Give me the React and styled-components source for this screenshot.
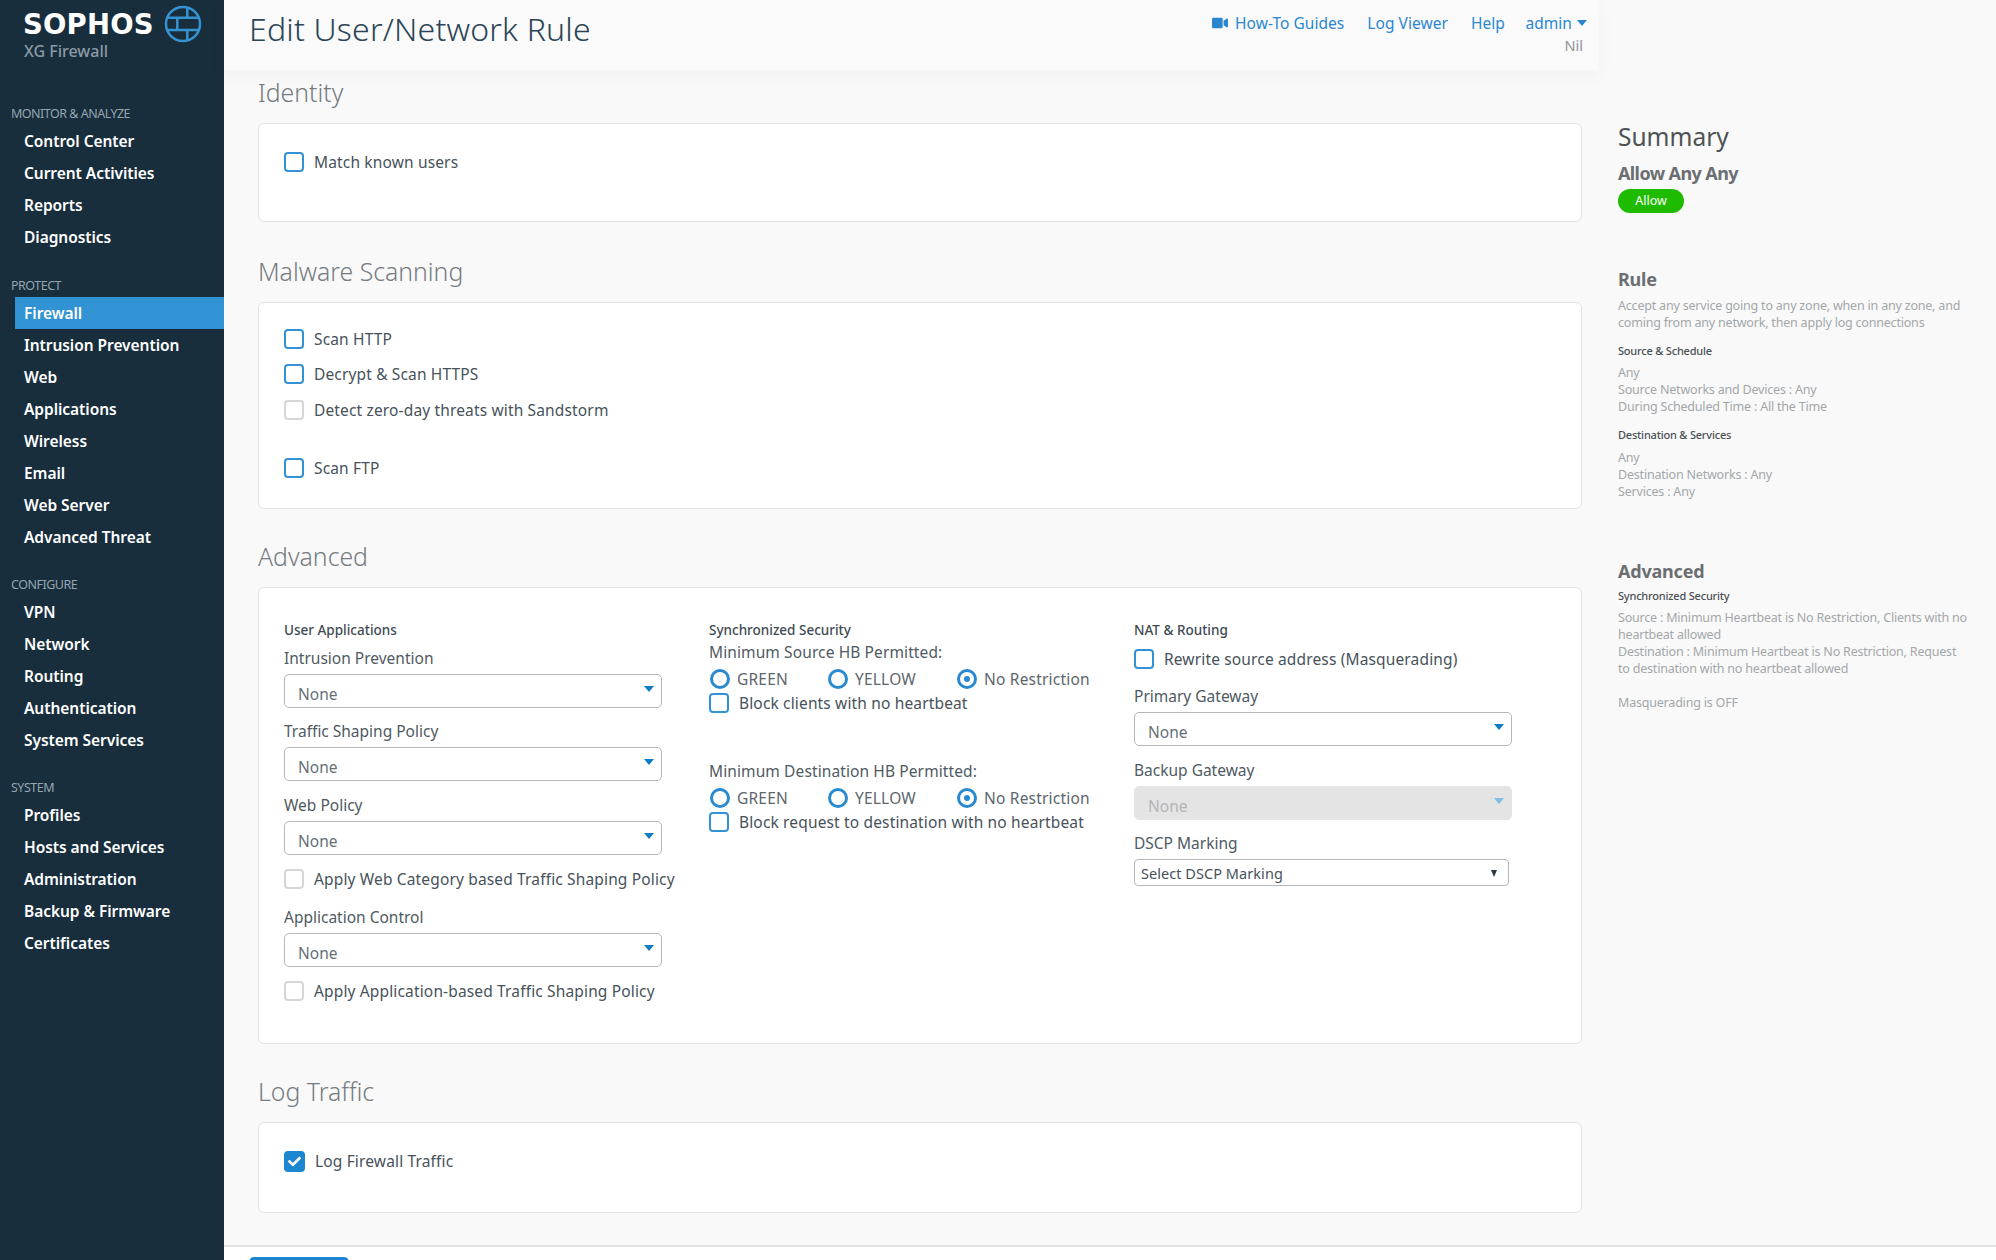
import React from "react";
import styled, { createGlobalStyle } from "styled-components";
import { FaVideo, FaCheck } from "react-icons/fa";

const Global = createGlobalStyle`
  html, body { margin: 0; padding: 0; height: 100%; overflow: hidden; background: #f9f9f9; }
  * { box-sizing: border-box; }
  body { font-family: "Noto Sans", "Liberation Sans", sans-serif; }
`;

const Page = styled.div`
  display: flex;
  width: 1996px;
  height: 1260px;
  overflow: hidden;
`;

const Sidebar = styled.nav`
  width: 224px;
  flex: none;
  background: #182e3d;
  padding-top: 14px;
`;

const Brand = styled.div`
  position: relative;
  height: 87px;
  padding-left: 23px;
`;

const BrandName = styled.div`
  font-family: "DejaVu Sans", sans-serif;
  font-weight: 700;
  font-size: 27.5px;
  line-height: 21px;
  letter-spacing: 0.2px;
  color: #fff;
`;

const BrandSub = styled.div`
  margin-top: 6px;
  margin-left: 1px;
  font-size: 16px;
  line-height: 20px;
  font-weight: 500;
  color: #8b9aa3;
`;

const Globe = styled.svg`
  position: absolute;
  left: 164px;
  top: -9px;
`;

const NavGroup = styled.div`
  margin-bottom: ${(p) => p.$gap || 19}px;
`;

const NavLabel = styled.div`
  height: 24px;
  line-height: 25px;
  padding-left: 11px;
  font-size: 12.5px;
  letter-spacing: -0.5px;
  color: #94a5b0;
`;

const NavItem = styled.div`
  height: 32px;
  line-height: 32px;
  margin-left: 15px;
  padding-left: 9px;
  font-size: 15.5px;
  font-weight: 600;
  letter-spacing: -0.05px;
  color: #fff;
  background: ${(p) => (p.$active ? "#3193d3" : "transparent")};
`;

const Body = styled.div`
  flex: 1;
  display: flex;
  flex-direction: column;
  min-width: 0;
`;

const Top = styled.div`
  flex: 1;
  display: flex;
  min-height: 0;
`;

const Main = styled.div`
  width: 1375px;
  flex: none;
`;

const Header = styled.header`
  position: relative;
  height: 70px;
  padding: 8px 12px 0 25px;
  display: flex;
  justify-content: space-between;
  background: #fafafa;
  box-shadow: 0 6px 20px rgba(0, 0, 0, 0.03);
`;

const Title = styled.h1`
  margin: 0;
  font-size: 32px;
  line-height: 42px;
  font-weight: 300;
  letter-spacing: 0.2px;
  color: #2b4556;
`;

const HeaderRight = styled.div`
  text-align: right;
  padding-top: 1px;
`;

const Links = styled.div`
  display: flex;
  align-items: center;
  gap: 23px;
  height: 28px;
`;

const Link = styled.a`
  display: flex;
  align-items: center;
  gap: 7px;
  font-size: 15.5px;
  letter-spacing: 0.05px;
  color: #2a87cf;
`;

const UserLink = styled(Link)`
  margin-left: -2.5px;
`;

const Caret = styled.span`
  width: 0;
  height: 0;
  margin-left: -2px;
  border-left: 5px solid transparent;
  border-right: 5px solid transparent;
  border-top: 6px solid #2a87cf;
`;

const Nil = styled.div`
  font-size: 14.5px;
  line-height: 16px;
  padding-right: 4px;
  color: #8d9499;
`;

const Content = styled.div`
  padding: 4px 17px 0 34px;
`;

const SectionTitle = styled.h2`
  margin: 0 0 13px;
  font-size: 24.8px;
  line-height: 36px;
  font-weight: 300;
  color: #767c81;
`;

const Card = styled.section`
  height: ${(p) => p.$h}px;
  margin-bottom: ${(p) => p.$gap || 29}px;
  padding: ${(p) => p.$pad || 0}px 0 0 25px;
  background: #fff;
  border: 1.5px solid #e2e2e2;
  border-radius: 6px;
`;

const Check = styled.span`
  flex: none;
  width: ${(p) => (p.$on ? 21 : 20)}px;
  height: ${(p) => (p.$on ? 21 : 20)}px;
  display: inline-flex;
  align-items: center;
  justify-content: center;
  border-radius: 4px;
  border: 2px solid ${(p) => (p.$muted ? "#d4d6d8" : p.$on ? "#1b87d0" : "#3391d6")};
  background: ${(p) => (p.$on ? "#1b87d0" : "#fff")};
  color: #fff;
  font-size: 13px;
`;

const CheckRow = styled.label`
  display: flex;
  align-items: center;
  gap: ${(p) => p.$gap || 10}px;
  height: 24px;
  margin-top: ${(p) => p.$mt || 0}px;
  font-size: 15.5px;
  letter-spacing: 0.15px;
  color: #47525a;
  white-space: nowrap;
`;

const Columns = styled.div`
  display: flex;
`;

const Column = styled.div`
  width: 425px;
  flex: none;
`;

const ColHead = styled.div`
  height: 20px;
  line-height: 20px;
  font-size: 13.5px;
  font-weight: 500;
  color: #3e4a52;
`;

const FieldLabel = styled.div`
  height: 24px;
  line-height: 24px;
  margin-top: ${(p) => p.$mt ?? 12}px;
  font-size: 15.5px;
  color: #4f5a62;
`;

const Select = styled.div`
  position: relative;
  width: 378px;
  height: 34px;
  margin-top: 4px;
  padding: 7px 0 0 13px;
  font-size: 15.5px;
  line-height: 24px;
  border-radius: 5px;
  border: 1px solid ${(p) => (p.$off ? "#e4e4e4" : "#b3b8bc")};
  background: ${(p) => (p.$off ? "#e4e4e4" : "#fff")};
  color: ${(p) => (p.$off ? "#b3b5b7" : "#666f76")};
  &::after {
    content: "";
    position: absolute;
    right: 7px;
    top: 11px;
    border-left: 5px solid transparent;
    border-right: 5px solid transparent;
    border-top: 6px solid ${(p) => (p.$off ? "#7fbce6" : "#0f7cc6")};
  }
`;

const NativeSelect = styled.div`
  position: relative;
  width: 375px;
  height: 27px;
  margin-top: 4px;
  padding-left: 6px;
  font-size: 14.5px;
  letter-spacing: 0.05px;
  line-height: 26px;
  border-radius: 4px;
  border: 1px solid #b3b8bc;
  background: #fff;
  color: #47525a;
  &::after {
    content: "";
    position: absolute;
    right: 11px;
    top: 10px;
    border-left: 3.5px solid transparent;
    border-right: 3.5px solid transparent;
    border-top: 7px solid #2b3a44;
  }
`;

const HbLabel = styled.div`
  height: 22px;
  line-height: 22px;
  margin-top: ${(p) => p.$mt || 0}px;
  font-size: 15.5px;
  letter-spacing: 0.11px;
  color: #4f5a62;
`;

const RadioRow = styled.div`
  display: grid;
  grid-template-columns: 118px 129px auto;
  height: 24px;
  margin-top: 4px;
  margin-left: 1px;
`;

const RadioItem = styled.label`
  display: flex;
  align-items: center;
  gap: 7px;
  font-size: 15.5px;
  letter-spacing: 0.2px;
  color: #5c666d;
  white-space: nowrap;
`;

const Radio = styled.span`
  width: 20px;
  height: 20px;
  flex: none;
  display: inline-flex;
  align-items: center;
  justify-content: center;
  border-radius: 50%;
  border: 3px solid #2a8ad0;
  background: #fff;
  &::after {
    content: "";
    width: 6px;
    height: 6px;
    border-radius: 50%;
    background: ${(p) => (p.$on ? "#2a8ad0" : "transparent")};
  }
`;

const Summary = styled.aside`
  flex: 1;
  padding: 119px 28px 0 19px;
`;

const SumTitle = styled.div`
  font-size: 24.5px;
  line-height: 36px;
  color: #4d5255;
`;

const SumName = styled.div`
  margin-top: 4px;
  font-size: 18px;
  line-height: 28px;
  font-weight: 700;
  letter-spacing: -0.6px;
  color: #6c6f71;
`;

const Pill = styled.div`
  width: 66px;
  height: 24px;
  margin-top: 2px;
  border-radius: 12px;
  background: #1fbb00;
  color: #fff;
  font-size: 12.5px;
  line-height: 24px;
  text-align: center;
`;

const SumHead = styled.div`
  margin-top: ${(p) => p.$mt}px;
  font-size: 18px;
  line-height: 28px;
  font-weight: 700;
  letter-spacing: -0.2px;
  color: #6c6f71;
`;

const SumSub = styled.div`
  margin-top: ${(p) => p.$mt}px;
  font-size: 11px;
  line-height: 17px;
  font-weight: 500;
  letter-spacing: -0.2px;
  color: #4b5054;
`;

const SumText = styled.div`
  margin-top: ${(p) => p.$mt || 0}px;
  font-size: 12.5px;
  line-height: 17px;
  letter-spacing: -0.2px;
  color: #a3a7aa;
`;

const Footer = styled.footer`
  height: 15px;
  flex: none;
  padding: 10px 0 0 25px;
  background: #fff;
  border-top: 2px solid #e2e2e2;
  overflow: hidden;
`;

const SaveButton = styled.div`
  width: 100px;
  height: 30px;
  border-radius: 5px 5px 0 0;
  background: #1b87d0;
`;

function SidebarGroup({ label, items, active, gap }) {
  return (
    <NavGroup $gap={gap}>
      <NavLabel>{label}</NavLabel>
      {items.map((item) => (
        <NavItem key={item} $active={item === active}>{item}</NavItem>
      ))}
    </NavGroup>
  );
}

function Section({ title, h, pad, gap, children }) {
  return (
    <>
      <SectionTitle>{title}</SectionTitle>
      <Card $h={h} $pad={pad} $gap={gap}>{children}</Card>
    </>
  );
}

function Option({ label, muted, on, mt }) {
  return (
    <CheckRow $mt={mt}>
      <Check $muted={muted} $on={on}>{on ? <FaCheck /> : null}</Check>
      {label}
    </CheckRow>
  );
}

function SelectField({ label, mt, off }) {
  return (
    <>
      <FieldLabel $mt={mt}>{label}</FieldLabel>
      <Select $off={off}>None</Select>
    </>
  );
}

function Heartbeat({ label, mt, block }) {
  return (
    <>
      <HbLabel $mt={mt}>{label}</HbLabel>
      <RadioRow>
        <RadioItem><Radio />GREEN</RadioItem>
        <RadioItem><Radio />YELLOW</RadioItem>
        <RadioItem><Radio $on />No Restriction</RadioItem>
      </RadioRow>
      <CheckRow>
        <Check />
        {block}
      </CheckRow>
    </>
  );
}

export default function App() {
  return (
    <Page>
      <Global />
      <Sidebar>
        <Brand>
          <BrandName>SOPHOS</BrandName>
          <BrandSub>XG Firewall</BrandSub>
          <Globe width="38" height="38" viewBox="0 0 38 38" fill="none" stroke="#3593d2" strokeWidth="2.5">
            <circle cx="19" cy="19" r="17" />
            <path d="M3 12.7h32M3 25h32M23.3 2v10.7M13.3 12.7V25M23.3 25v11" />
          </Globe>
        </Brand>
        <SidebarGroup label="MONITOR & ANALYZE" gap={19.5} items={["Control Center", "Current Activities", "Reports", "Diagnostics"]} />
        <SidebarGroup
          label="PROTECT"
          active="Firewall"
          items={["Firewall", "Intrusion Prevention", "Web", "Applications", "Wireless", "Email", "Web Server", "Advanced Threat"]}
        />
        <SidebarGroup label="CONFIGURE" items={["VPN", "Network", "Routing", "Authentication", "System Services"]} />
        <SidebarGroup label="SYSTEM" items={["Profiles", "Hosts and Services", "Administration", "Backup & Firmware", "Certificates"]} />
      </Sidebar>
      <Body>
        <Top>
          <Main>
            <Header>
              <Title>Edit User/Network Rule</Title>
              <HeaderRight>
                <Links>
                  <Link><FaVideo size={16} />How-To Guides</Link>
                  <Link>Log Viewer</Link>
                  <Link>Help</Link>
                  <UserLink>admin<Caret /></UserLink>
                </Links>
                <Nil>Nil</Nil>
              </HeaderRight>
            </Header>
            <Content>
              <Section title="Identity" h={99} pad={26} gap={31}>
                <Option label="Match known users" />
              </Section>
              <Section title="Malware Scanning" h={207} pad={24}>
                <Option label="Scan HTTP" />
                <Option label="Decrypt & Scan HTTPS" mt={11} />
                <Option label="Detect zero-day threats with Sandstorm" muted mt={12} />
                <Option label="Scan FTP" mt={34} />
              </Section>
              <Section title="Advanced" h={457} pad={32}>
                <Columns>
                  <Column>
                    <ColHead>User Applications</ColHead>
                    <SelectField label="Intrusion Prevention" mt={6} />
                    <SelectField label="Traffic Shaping Policy" mt={11} />
                    <SelectField label="Web Policy" />
                    <Option label="Apply Web Category based Traffic Shaping Policy" muted mt={12} />
                    <SelectField label="Application Control" mt={14} />
                    <Option label="Apply Application-based Traffic Shaping Policy" muted mt={12} />
                  </Column>
                  <Column>
                    <ColHead>Synchronized Security</ColHead>
                    <Heartbeat label="Minimum Source HB Permitted:" mt={1} block="Block clients with no heartbeat" />
                    <Heartbeat label="Minimum Destination HB Permitted:" mt={45} block="Block request to destination with no heartbeat" />
                  </Column>
                  <Column>
                    <ColHead>NAT &amp; Routing</ColHead>
                    <Option label="Rewrite source address (Masquerading)" mt={7} />
                    <SelectField label="Primary Gateway" mt={13} />
                    <SelectField label="Backup Gateway" mt={12} off />
                    <FieldLabel $mt={11}>DSCP Marking</FieldLabel>
                    <NativeSelect>Select DSCP Marking</NativeSelect>
                  </Column>
                </Columns>
              </Section>
              <Section title="Log Traffic" h={91} pad={26}>
                <Option label="Log Firewall Traffic" on />
              </Section>
            </Content>
          </Main>
          <Summary>
            <SumTitle>Summary</SumTitle>
            <SumName>Allow Any Any</SumName>
            <Pill>Allow</Pill>
            <SumHead $mt={52}>Rule</SumHead>
            <SumText $mt={4}>Accept any service going to any zone, when in any zone, and coming from any network, then apply log connections</SumText>
            <SumSub $mt={11}>Source &amp; Schedule</SumSub>
            <SumText $mt={5}>Any</SumText>
            <SumText>Source Networks and Devices : Any</SumText>
            <SumText>During Scheduled Time : All the Time</SumText>
            <SumSub $mt={11}>Destination &amp; Services</SumSub>
            <SumText $mt={6}>Any</SumText>
            <SumText>Destination Networks : Any</SumText>
            <SumText>Services : Any</SumText>
            <SumHead $mt={57}>Advanced</SumHead>
            <SumSub $mt={2}>Synchronized Security</SumSub>
            <SumText $mt={5}>Source : Minimum Heartbeat is No Restriction, Clients with no heartbeat allowed</SumText>
            <SumText>Destination : Minimum Heartbeat is No Restriction, Request to destination with no heartbeat allowed</SumText>
            <SumText $mt={17}>Masquerading is OFF</SumText>
          </Summary>
        </Top>
        <Footer>
          <SaveButton />
        </Footer>
      </Body>
    </Page>
  );
}
